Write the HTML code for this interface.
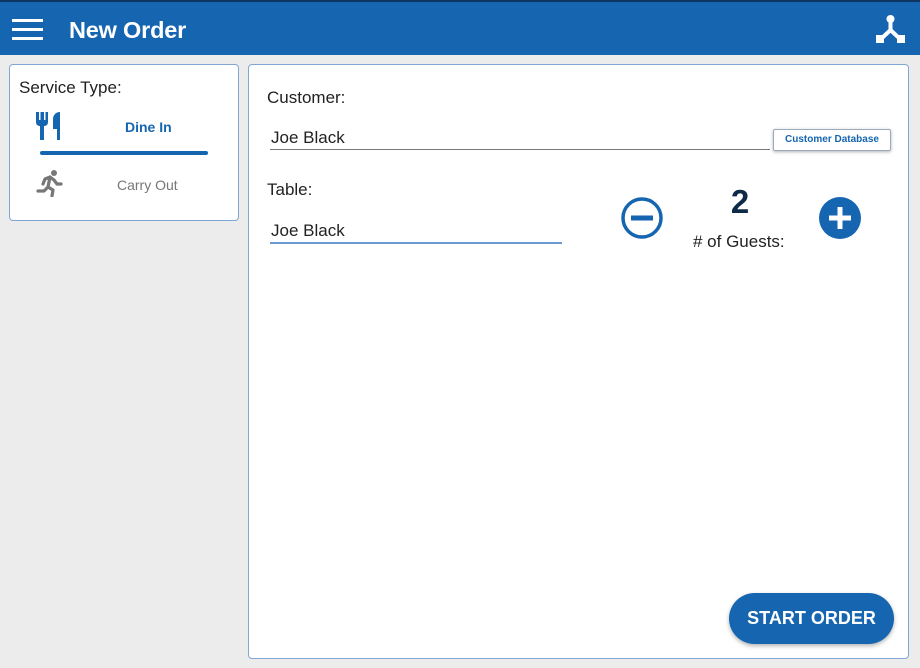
<!DOCTYPE html>
<html><head><style>
*{margin:0;padding:0;box-sizing:border-box}
body{width:920px;height:668px;background:#ececec;font-family:"Liberation Sans",sans-serif;position:relative;overflow:hidden}
.hdr{position:absolute;left:0;top:0;width:920px;height:55px;background:#1565b0;border-top:2px solid #0e3560}
.ham{position:absolute;left:12px;top:17px;width:31px}
.ham div{height:3px;background:#fff;margin-bottom:6px}
.title{position:absolute;left:69px;top:15px;color:#fff;font-size:23.5px;font-weight:bold;letter-spacing:-0.2px}
.p{position:absolute;background:#fff;border:1px solid #7fa6d4;border-radius:4px}
.t{position:absolute;font-size:17px;color:#222}
.line{position:absolute;height:1px;background:#777}
</style></head><body>
<div class="hdr">
<div class="ham"><div></div><div></div><div></div></div>
<div class="title">New Order</div>
<svg style="position:absolute;left:876px;top:13px" width="29" height="29" viewBox="0 0 29 29"><circle cx="14.5" cy="4" r="4" fill="#fff"/><path d="M14.5 6 V15 L6 23 M14.5 15 L23 23" stroke="#fff" stroke-width="4" fill="none"/><rect x="0" y="20" width="8" height="8" fill="#fff"/><rect x="21" y="20" width="8" height="8" fill="#fff"/></svg>
</div>
<div class="p" style="left:9px;top:64px;width:230px;height:157px">
<div class="t" style="left:9px;top:13px">Service Type:</div>
<svg style="position:absolute;left:26px;top:47px" width="28" height="28" viewBox="0 0 28 28"><path d="M0 0v10c0 3 2 4 4 4v14h4V14c2 0 4-1 4-4V0h-2.5v8H8V0H4.5v8H3V0z" fill="#1565b0"/><path d="M21 28V17h-4V7c0-4 3-7 7-7v28z" fill="#1565b0"/></svg>
<div style="position:absolute;left:115px;top:54px;font-size:14px;font-weight:bold;color:#1565b0">Dine In</div>
<div style="position:absolute;left:30px;top:86px;width:168px;height:4px;background:#1565b0;border-radius:2px"></div>
<svg style="position:absolute;left:26px;top:104px" width="28" height="28" viewBox="0 0 28 28"><circle cx="18" cy="4" r="3" fill="#777"/><path d="M14 8 L9 10 L7 15 M14 8 L18 11 L21 15 L25 15 M14 8 L12 18 L17 21 L16 27 M12 18 L8 22 L2 22" stroke="#777" stroke-width="3.2" fill="none" stroke-linecap="round" stroke-linejoin="round"/></svg>
<div style="position:absolute;left:107px;top:112px;font-size:14px;color:#777">Carry Out</div>
</div>
<div class="p" style="left:248px;top:64px;width:661px;height:595px">
<div class="t" style="left:18px;top:23px">Customer:</div>
<div class="t" style="left:22px;top:63px">Joe Black</div>
<div class="line" style="left:21px;top:84px;width:500px"></div>
<div style="position:absolute;left:524px;top:64px;width:118px;height:22px;border:1px solid #9ab;border-radius:2px;box-shadow:0 1px 3px rgba(0,0,0,.3);font-size:10px;font-weight:bold;color:#1565b0;text-align:center;line-height:20px">Customer Database</div>
<div class="t" style="left:18px;top:115px">Table:</div>
<div class="t" style="left:22px;top:156px">Joe Black</div>
<div style="position:absolute;left:21px;top:177px;width:292px;height:2px;background:#6b9bcf"></div>
<svg style="position:absolute;left:371px;top:131px" width="44" height="44" viewBox="0 0 44 44"><circle cx="22" cy="22" r="19" fill="none" stroke="#1565b0" stroke-width="3.5"/><rect x="11" y="19.5" width="22" height="5" fill="#1565b0"/></svg>
<div style="position:absolute;left:470px;top:118px;width:42px;text-align:center;font-size:33px;font-weight:bold;color:#0f2a48">2</div>
<div class="t" style="left:444px;top:167px">#&nbsp;of Guests:</div>
<svg style="position:absolute;left:569px;top:131px" width="44" height="44" viewBox="0 0 44 44"><circle cx="22" cy="22" r="21" fill="#1565b0"/><rect x="11" y="19.5" width="22" height="5" fill="#fff"/><rect x="19.5" y="11" width="5" height="22" fill="#fff"/></svg>
<div style="position:absolute;left:480px;top:528px;width:165px;height:51px;background:#1565b0;border-radius:26px;box-shadow:0 2px 4px rgba(0,0,0,.3);color:#fff;font-size:18px;font-weight:bold;text-align:center;line-height:51px">START ORDER</div>
</div>
</body></html>
